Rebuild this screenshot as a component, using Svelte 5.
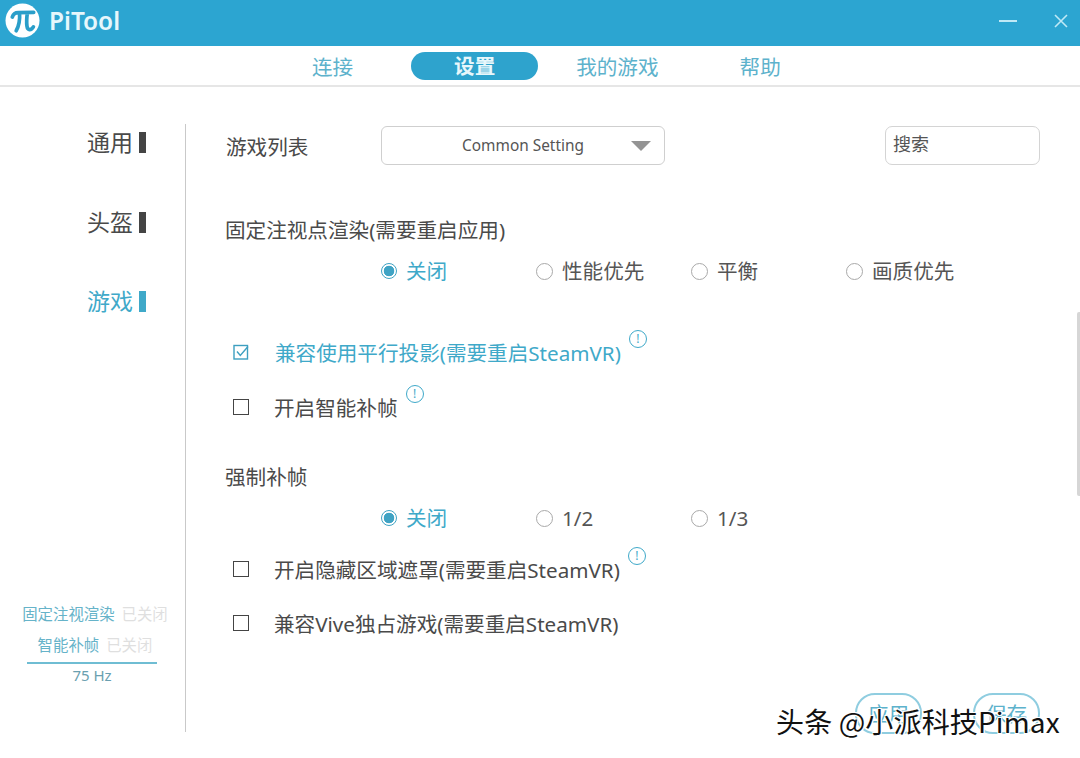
<script>
  const navItems = [
    { label: '连接' },
    { label: '设置', active: true },
    { label: '我的游戏' },
    { label: '帮助' }
  ];
  const sideItems = [
    { label: '通用' },
    { label: '头盔' },
    { label: '游戏', active: true }
  ];
  const foveated = ['关闭', '性能优先', '平衡', '画质优先'];
  const forced = ['关闭', '1/2', '1/3'];
</script>

<div class="window">
  <header class="titlebar">
    <div class="brand">
      <svg class="logo" viewBox="0 0 36 36" aria-hidden="true">
        <circle cx="18" cy="18" r="17.5" fill="#fff" />
        <path d="M7.5 14.5 C8.6 11 10.5 9.8 13.5 9.8 L29.5 9.6 M15 10 C15.4 17 14.6 23.5 11.5 28.5 M23 10 C22.2 16 22 20 22.6 24 C23.2 28.4 27 28.4 29.2 24.6" fill="none" stroke="#2a9ec9" stroke-width="3.8" stroke-linecap="round" />
      </svg>
      <span class="brand-name">PiTool</span>
    </div>
    <div class="win-controls">
      <svg class="win-min" viewBox="0 0 18 4" aria-hidden="true"><path d="M0 2H18" stroke="#bfe9f6" stroke-width="2" /></svg>
      <svg class="win-close" viewBox="0 0 14 14" aria-hidden="true"><path d="M1 1L13 13M13 1L1 13" stroke="#bfe9f6" stroke-width="1.6" /></svg>
    </div>
  </header>

  <nav class="tabs">
    {#each navItems as item}
      <span class="tab" class:active={item.active}>{item.label}</span>
    {/each}
  </nav>

  <div class="body">
    <aside class="sidebar">
      <ul class="side-menu">
        {#each sideItems as item}
          <li class="side-item" class:active={item.active}>{item.label}<i class="side-mark"></i></li>
        {/each}
      </ul>
      <div class="status">
        <div class="status-line"><b>固定注视渲染</b><em>已关闭</em></div>
        <div class="status-line"><b>智能补帧</b><em>已关闭</em></div>
        <div class="status-hz">75 Hz</div>
      </div>
    </aside>

    <main class="content">
      <div class="top-row">
        <span class="label list-label">游戏列表</span>
        <div class="select">
          <span>Common Setting</span>
          <i class="caret"></i>
        </div>
        <div class="search">搜索</div>
      </div>

      <div class="label heading foveat">固定注视点渲染(需要重启应用)</div>
      <div class="radios">
        {#each foveated as opt, i}
          <span class="radio" class:on={i === 0}><i class="dot"></i>{opt}</span>
        {/each}
      </div>

      <div class="check on first">
        <svg class="box" viewBox="0 0 16 16" aria-hidden="true">
          <rect x="1" y="1.5" width="13.5" height="13.5" fill="none" stroke="#3d9fc0" stroke-width="1.4" />
          <path d="M4 7.5L7.3 11.5L15 2.5" fill="none" stroke="#3d9fc0" stroke-width="1.4" />
        </svg>
        <span>兼容使用平行投影(需要重启SteamVR)</span>
        <i class="info">!</i>
      </div>
      <div class="check second">
        <i class="square"></i>
        <span>开启智能补帧</span>
        <i class="info">!</i>
      </div>

      <div class="label heading forced">强制补帧</div>
      <div class="radios later">
        {#each forced as opt, i}
          <span class="radio" class:on={i === 0}><i class="dot"></i>{opt}</span>
        {/each}
      </div>

      <div class="check third">
        <i class="square"></i>
        <span>开启隐藏区域遮罩(需要重启SteamVR)</span>
        <i class="info">!</i>
      </div>
      <div class="check fourth">
        <i class="square"></i>
        <span>兼容Vive独占游戏(需要重启SteamVR)</span>
      </div>

      <div class="actions">
        <span class="btn apply">应用</span>
        <span class="btn save">保存</span>
      </div>
    </main>
  </div>

  <i class="scrollbar"></i>
  <div class="watermark">头条 @小派科技Pimax</div>
</div>

<style>
  :global(body) {
    margin: 0;
    background: #fff;
  }
  .window {
    position: relative;
    width: 1080px;
    height: 758px;
    overflow: hidden;
    background: #fff;
    color: #4a4a4a;
    font-family: "Noto Sans", "Noto Sans CJK SC", sans-serif;
    font-size: 20.6px;
  }
  i, em { font-style: normal; }
  b { font-weight: 400; }

  .titlebar {
    height: 46px;
    background: #2ca5d1;
    display: flex;
    align-items: center;
    justify-content: space-between;
    padding: 0 12px 5px 5px;
    box-sizing: border-box;
  }
  .brand { display: flex; align-items: center; gap: 9px; }
  .logo { width: 35px; height: 35px; }
  .brand-name {
    color: #e6f7fc;
    font-size: 24.4px;
    font-weight: 600;
    line-height: 30px;
  }
  .win-controls { display: flex; align-items: center; gap: 37px; padding-top: 1px; }
  .win-min { width: 18px; height: 4px; }
  .win-close { width: 14px; height: 14px; }

  .tabs {
    height: 41px;
    padding-top: 3px;
    border-bottom: 2px solid #e6e6e6;
    box-sizing: border-box;
    display: flex;
    align-items: center;
    padding-left: 312px;
    color: #5db2cc;
  }
  .tab { margin-right: 58px; line-height: 28px; }
  .tab.active {
    background: #2ea3cd;
    color: #e8f7fb;
    border-radius: 15px;
    width: 127px;
    text-align: center;
    margin-right: 38px;
    margin-bottom: 2px;
    height: 28px;
    font-weight: 700;
  }
  .tab:nth-child(3) { margin-right: 81px; }

  .body {
    display: flex;
    padding-top: 37px;
  }
  .sidebar {
    width: 186px;
    height: 608px;
    box-sizing: border-box;
    border-right: 1px solid #c9c9c9;
    display: flex;
    flex-direction: column;
    justify-content: space-between;
  }
  .side-menu {
    list-style: none;
    margin: 0;
    padding: 2px 39px 0 0;
    display: flex;
    flex-direction: column;
    align-items: flex-end;
    gap: 46.5px;
  }
  .side-item {
    display: flex;
    align-items: center;
    gap: 6px;
    font-size: 23px;
    line-height: 33px;
    color: #4a4a4a;
  }
  .side-mark { width: 7px; height: 21px; background: #444; }
  .side-item.active { color: #3fa9c9; }
  .side-item.active .side-mark { background: #3fa9c9; }

  .status {
    width: 150px;
    margin: 0 0 46px 20px;
    font-size: 15.4px;
    text-align: center;
    color: #66b3c9;
  }
  .status-line { line-height: 22px; margin-bottom: 9px; white-space: nowrap; }
  .status-line em { color: #dfdfdf; margin-left: 7px; }
  .status-line:nth-child(2) { margin-bottom: 5px; }
  .status-hz {
    width: 130px;
    margin: 0 0 0 7px;
    border-top: 2px solid #6fbdd3;
    font-size: 15px;
    line-height: 22px;
    color: #6a9fb0;
  }

  .content {
    flex: 1;
    padding: 2px 40px 0 40px;
    position: relative;
    min-width: 0;
  }
  .top-row { display: flex; align-items: center; height: 39px; }
  .list-label { width: 155px; flex: none; padding-top: 2px; }
  .select {
    width: 284px;
    height: 39px;
    box-sizing: border-box;
    border: 1px solid #cfcfcf;
    border-radius: 6px;
    display: flex;
    align-items: center;
    justify-content: center;
    font-size: 15.4px;
    color: #555;
    position: relative;
  }
  .caret {
    position: absolute;
    right: 13px;
    top: 14px;
    width: 0;
    height: 0;
    border-left: 10px solid transparent;
    border-right: 10px solid transparent;
    border-top: 10px solid #949494;
  }
  .search {
    margin-left: auto;
    width: 155px;
    height: 39px;
    box-sizing: border-box;
    border: 1px solid #d4d4d4;
    border-radius: 7px;
    padding-left: 7px;
    font-size: 18px;
    line-height: 35px;
    color: #555;
  }

  .label { line-height: 30px; margin-left: -1px; }
  .list-label { margin-left: 0; }
  .foveat { margin-top: 50px; }
  .forced { margin-top: 40px; }

  .radios {
    display: flex;
    padding-left: 155px;
    margin-top: 11px;
    height: 30px;
    align-items: center;
  }
  .radio {
    width: 155px;
    display: flex;
    align-items: center;
    gap: 9px;
    line-height: 30px;
    color: #555;
  }
  .dot {
    width: 15px;
    height: 15px;
    border: 1px solid #a9a9a9;
    border-radius: 50%;
    box-sizing: content-box;
    flex: none;
  }
  .radio.on { color: #3fa9c9; }
  .radio.on .dot {
    border: 1.5px solid #3fa3c4;
    width: 14px;
    height: 14px;
    background: radial-gradient(circle, #3fa3c4 0 5px, #fff 5.6px);
  }

  .check {
    display: flex;
    align-items: center;
    height: 30px;
    padding-left: 7px;
    position: relative;
  }
  .check > span { margin-left: 26px; white-space: nowrap; }
  .check.on { color: #3fa9c9; }
  .first { margin-top: 51px; }
  .second { margin-top: 25px; }
  .third { margin-top: 21px; }
  .fourth { margin-top: 24px; }
  .box { width: 16px; height: 16px; flex: none; }
  .square {
    width: 14px;
    height: 14px;
    border: 1.5px solid #444;
    box-sizing: content-box;
    flex: none;
    margin-right: -1px;
  }
  .info {
    width: 16px;
    height: 16px;
    border: 1.5px solid #3fa9c9;
    border-radius: 50%;
    color: #3fa9c9;
    font-size: 12px;
    line-height: 16px;
    text-align: center;
    margin: -26px 0 0 8px;
    flex: none;
  }

  .actions {
    position: absolute;
    right: 40px;
    top: 569px;
    display: flex;
    gap: 51px;
  }
  .btn {
    width: 67px;
    height: 41px;
    box-sizing: border-box;
    border: 2px solid #8fcde0;
    border-radius: 20px;
    text-align: center;
    line-height: 38px;
    color: #5db2cc;
    background: #fff;
  }

  .scrollbar {
    position: absolute;
    right: 0;
    top: 312px;
    width: 3px;
    height: 184px;
    background: #d6d6d6;
    border-radius: 2px 0 0 2px;
  }
  .watermark {
    position: absolute;
    left: 776px;
    top: 702px;
    font-size: 28px;
    letter-spacing: 0.15px;
    line-height: 38px;
    color: #111;
    white-space: nowrap;
    font-family: "Noto Sans CJK SC", "Noto Sans", sans-serif;
    text-shadow: 1px 1px 0 #fff, -1px -1px 0 #fff, 1px -1px 0 #fff, -1px 1px 0 #fff;
  }
</style>
